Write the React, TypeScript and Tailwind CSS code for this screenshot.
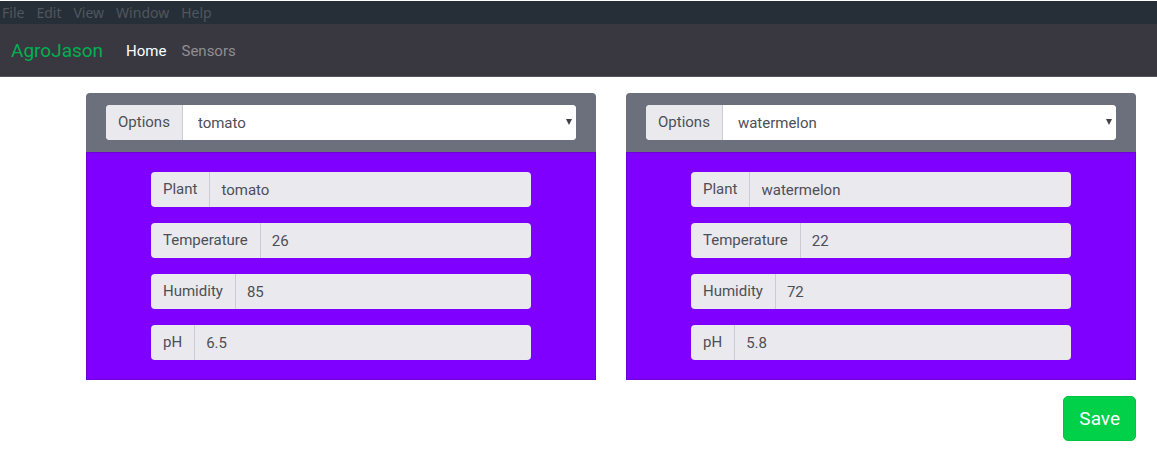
import { useId, useState } from "react";

interface Crop {
  name: string;
  temperature: string;
  humidity: string;
  ph: string;
}

const crops: Crop[] = [
  { name: "tomato", temperature: "26", humidity: "85", ph: "6.5" },
  { name: "watermelon", temperature: "22", humidity: "72", ph: "5.8" },
];

const menuItems = ["File", "Edit", "View", "Window", "Help"];

function Field({ label, value }: { label: string; value: string }) {
  const id = useId();
  return (
    <div className="flex h-[35px] overflow-hidden rounded bg-[#e9e9ee]">
      <label htmlFor={id} className="flex items-center border-r border-[#cbcbd3] px-3 text-[#4d4f57]">
        {label}
      </label>
      <input id={id} readOnly value={value} className="min-w-0 flex-1 bg-transparent px-[11px] pt-0.5 outline-none" />
    </div>
  );
}

function CropCard({ initial }: { initial: string }) {
  const id = useId();
  const [selected, setSelected] = useState(initial);
  const crop = crops.find((c) => c.name === selected) ?? crops[0];
  return (
    <section className="min-w-0 flex-1 overflow-hidden rounded-t">
      <div className="bg-[#6c6f7c] px-5 py-3">
        <div className="flex h-[35px] overflow-hidden rounded bg-white">
          <label htmlFor={id} className="flex items-center border-r border-[#cbcbd3] bg-[#e9e9ee] px-3 text-[#4d4f57]">
            Options
          </label>
          <div className="relative flex min-w-0 flex-1">
            <select
              id={id}
              value={selected}
              onChange={(e) => setSelected(e.target.value)}
              className="w-full appearance-none bg-white px-[15px] pt-0.5 outline-none"
            >
              {crops.map((c) => (
                <option key={c.name}>{c.name}</option>
              ))}
            </select>
            <svg viewBox="0 0 6 6" className="pointer-events-none absolute top-3.5 right-1 size-1.5" aria-hidden="true">
              <path d="M0 0h6L3 6z" fill="#404047" />
            </svg>
          </div>
        </div>
      </div>
      <div className="flex flex-col gap-4 border border-[#6d00d6] bg-[#8000ff] px-16 py-[19px]">
        <Field label="Plant" value={crop.name} />
        <Field label="Temperature" value={crop.temperature} />
        <Field label="Humidity" value={crop.humidity} />
        <Field label="pH" value={crop.ph} />
      </div>
    </section>
  );
}

export default function App() {
  return (
    <div className="min-h-screen bg-white font-[Roboto,sans-serif] text-[15px] text-[#4d4f57]">
      <div className="flex h-6 items-center gap-3 border-t border-white bg-[#262f38] px-0.5 font-['Noto_Sans',sans-serif] text-[14px] text-[#50565d]">
        {menuItems.map((item) => (
          <button key={item} type="button">
            {item}
          </button>
        ))}
      </div>
      <nav className="flex h-[53px] items-center border-b border-[#55545e] bg-[#393841] px-[11px] pt-0.5">
        <a href="#" className="mr-[23px] text-[19px] text-[#00b04f]">
          AgroJason
        </a>
        <a href="#" className="mr-[15px] text-white">
          Home
        </a>
        <a href="#sensors" className="text-[#8f8e95]">
          Sensors
        </a>
      </nav>
      <main className="pt-4 pr-[21px] pl-[86px]">
        <div className="flex gap-[30px]">
          <CropCard initial="tomato" />
          <CropCard initial="watermelon" />
        </div>
        <div className="mt-4 flex justify-end">
          <button type="button" className="h-[45px] rounded-[5px] border border-[#00c244] bg-[#00d148] px-[15px] pt-0.5 text-[19px] text-white">
            Save
          </button>
        </div>
      </main>
    </div>
  );
}
